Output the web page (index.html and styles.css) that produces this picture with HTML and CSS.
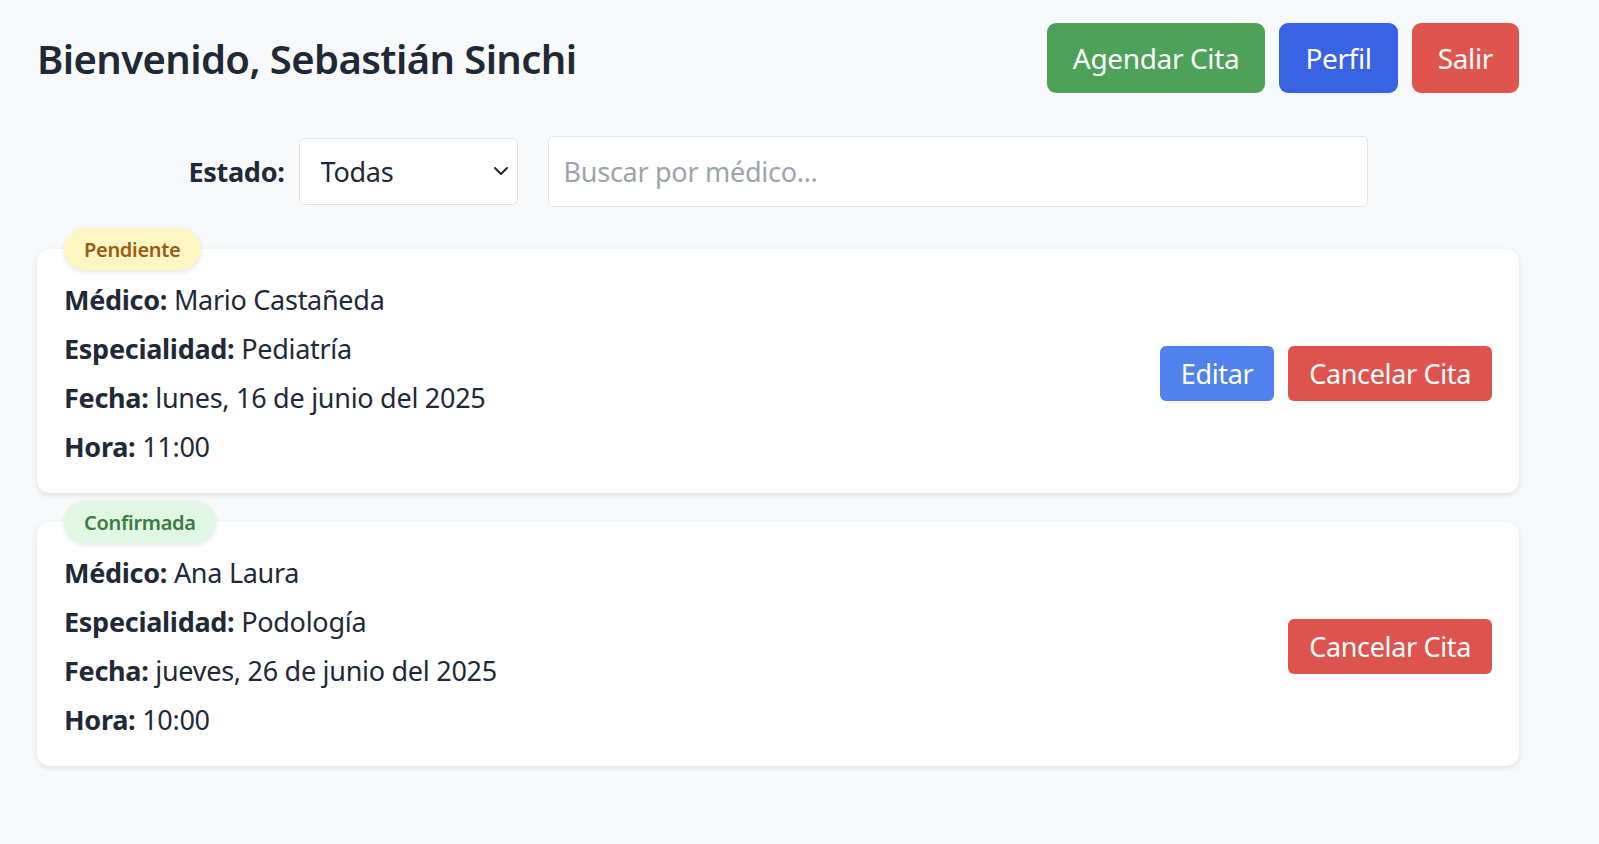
FILE: index.html
```html
<!DOCTYPE html>
<html lang="es">
<head>
<meta charset="utf-8">
<title>Mis citas</title>
<link rel="stylesheet" href="styles.css">
</head>
<body>
<div class="page">
  <header class="header">
    <h1 class="title">Bienvenido, Sebastián Sinchi</h1>
    <nav class="actions">
      <button class="btn btn-lg btn-green">Agendar Cita</button>
      <button class="btn btn-lg btn-blue">Perfil</button>
      <button class="btn btn-lg btn-red">Salir</button>
    </nav>
  </header>

  <div class="filters">
    <label class="filter-label" for="estado">Estado:</label>
    <div class="select-wrap">
      <select id="estado" class="select">
        <option>Todas</option>
      </select>
      <svg class="chevron" width="16" height="10" viewBox="0 0 16 10"><path d="M2 2l6 6 6-6" fill="none" stroke="#1f2937" stroke-width="2" stroke-linecap="round" stroke-linejoin="round"/></svg>
    </div>
    <input class="search" type="text" placeholder="Buscar por médico...">
  </div>

  <section class="list">
    <article class="card">
      <span class="badge badge-pending">Pendiente</span>
      <div class="info">
        <p><strong>Médico:</strong> Mario Castañeda</p>
        <p><strong>Especialidad:</strong> Pediatría</p>
        <p><strong>Fecha:</strong> lunes, 16 de junio del 2025</p>
        <p><strong>Hora:</strong> 11:00</p>
      </div>
      <div class="card-actions">
        <button class="btn btn-md btn-edit">Editar</button>
        <button class="btn btn-md btn-cancel">Cancelar Cita</button>
      </div>
    </article>

    <article class="card">
      <span class="badge badge-confirmed">Confirmada</span>
      <div class="info">
        <p><strong>Médico:</strong> Ana Laura</p>
        <p><strong>Especialidad:</strong> Podología</p>
        <p><strong>Fecha:</strong> jueves, 26 de junio del 2025</p>
        <p><strong>Hora:</strong> 10:00</p>
      </div>
      <div class="card-actions">
        <button class="btn btn-md btn-cancel">Cancelar Cita</button>
      </div>
    </article>
  </section>
</div>
</body>
</html>
```

FILE: styles.css
```css
* { box-sizing: border-box; }

body {
  margin: 0;
  background: #f8f9fb;
  color: #1f2937;
  font-family: "Noto Sans", "Open Sans", sans-serif;
  letter-spacing: -0.28px;
}

.page {
  padding: 23px 80px 40px 37px;
}

.header {
  display: flex;
  align-items: center;
  justify-content: space-between;
}

.title {
  margin: 0;
  font-size: 40px;
  font-weight: 600;
  letter-spacing: -0.6px;
}

.actions {
  display: flex;
  gap: 14px;
}

.btn {
  border: none;
  color: #fff;
  font-family: inherit;
  letter-spacing: -0.35px;
  cursor: pointer;
}

.btn-lg {
  height: 70px;
  padding: 0 26px;
  font-size: 28px;
  border-radius: 9px;
}

.btn-md {
  height: 55px;
  padding: 0 21px;
  font-size: 27px;
  border-radius: 6px;
}

.btn-green { background: #4da257; }
.btn-blue { background: #3a62e4; }
.btn-red { background: #e0544e; }
.btn-edit { background: #5082ee; }
.btn-cancel { background: #df534e; }

.filters {
  margin-top: 43px;
  display: flex;
  align-items: center;
  justify-content: center;
}

.filter-label {
  font-size: 27px;
  font-weight: 700;
  margin-right: 14px;
}

.select-wrap {
  position: relative;
  margin-right: 30px;
}

.select {
  appearance: none;
  -webkit-appearance: none;
  width: 219px;
  height: 67px;
  padding: 0 21px;
  border: 1px solid #e2e4e8;
  border-radius: 6px;
  background: #fff;
  color: #1f2937;
  font-family: inherit;
  font-size: 27px;
  letter-spacing: -0.28px;
}

.chevron {
  position: absolute;
  right: 9px;
  top: 28px;
  pointer-events: none;
}

.search {
  width: 820px;
  height: 71px;
  padding: 0 15px;
  border: 1px solid #e2e4e8;
  border-radius: 6px;
  background: #fff;
  font-family: inherit;
  font-size: 27px;
  letter-spacing: -0.28px;
  color: #1f2937;
}

.search::placeholder { color: #9ca3af; }

.list {
  margin-top: 42px;
  display: flex;
  flex-direction: column;
  gap: 29px;
}

.card {
  position: relative;
  display: flex;
  align-items: center;
  justify-content: space-between;
  background: #fff;
  border-radius: 13px;
  box-shadow: 0 2px 6px rgba(0, 0, 0, 0.1);
  padding: 26px 27px 22px;
}

.badge {
  position: absolute;
  top: -21px;
  left: 27px;
  height: 42px;
  padding: 0 20px;
  display: flex;
  align-items: center;
  border-radius: 21px;
  font-size: 20px;
  font-weight: 600;
  letter-spacing: -0.3px;
  box-shadow: 0 2px 5px rgba(0, 0, 0, 0.1);
}

.badge-pending { background: #fef7c3; color: #9a5c12; }
.badge-confirmed { background: #e0f7e4; color: #3a7d44; }

.info p {
  margin: 0;
  font-size: 27px;
  line-height: 49px;
}

.info strong { font-weight: 700; }

.card-actions {
  display: flex;
  gap: 14px;
}
```
